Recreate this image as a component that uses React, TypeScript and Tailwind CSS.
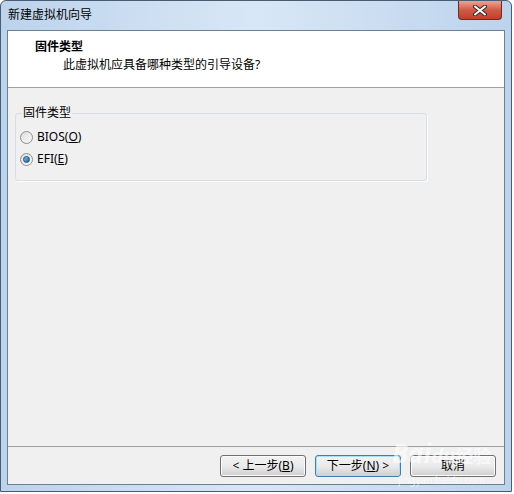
const font = { fontFamily: '"Noto Sans", "Noto Sans CJK SC", sans-serif' }

function Radio({ checked }: { checked?: boolean }) {
  return (
    <span className="w-[13px] h-[13px] rounded-full border border-[#8f8f8f] bg-gradient-to-br from-[#dcdcdc] to-[#fbfbfb] flex items-center justify-center">
      {checked && <span className="w-[7px] h-[7px] rounded-full bg-gradient-to-br from-[#7ec3f0] to-[#0d5fa8] border border-[#1e4f80]" />}
    </span>
  )
}

function Btn({ children, focus }: { children: React.ReactNode; focus?: boolean }) {
  return (
    <button
      className={
        'w-[86px] h-[22px] rounded-[3px] text-[12px] text-black flex items-center justify-center bg-gradient-to-b from-[#f2f2f2] via-[#ebebeb] to-[#cfcfcf] border ' +
        (focus ? 'border-[#3c7fb1] shadow-[inset_0_0_0_1px_#a6e1f9]' : 'border-[#707070] shadow-[inset_0_0_0_1px_#fcfcfc]')
      }
    >
      {children}
    </button>
  )
}

export default function App() {
  return (
    <div className="relative w-[514px] h-[494px] overflow-hidden bg-white" style={font}>
      <div className="w-[512px] h-[492px] rounded-t-[6px] border border-[#4a5c72] bg-gradient-to-r from-[#bcd3ec] via-[#d8e7f6] to-[#bcd3ec] flex flex-col">
        <div className="h-[29px] flex items-start justify-between">
          <span className="pl-[7px] pt-[7px] text-[12px] leading-[14px] text-black">新建虚拟机向导</span>
          <div className="mr-[9px] w-[44px] h-[19px] rounded-b-[4px] border border-t-0 border-[#6e2a22] bg-gradient-to-b from-[#e8a596] via-[#cf5a45] to-[#c43d28] flex items-center justify-center">
            <svg width="14" height="11" viewBox="0 0 14 11">
              <path d="M2 1.5 L12 9.5 M12 1.5 L2 9.5" stroke="#3b2a28" strokeWidth="4" strokeLinecap="round" />
              <path d="M2 1.5 L12 9.5 M12 1.5 L2 9.5" stroke="#ffffff" strokeWidth="2" strokeLinecap="round" />
            </svg>
          </div>
        </div>

        <div className="mx-[6px] h-[455px] border border-[#6d7f96] flex flex-col bg-[#f0f0f0]">
          <div className="h-[57px] bg-white border-b border-[#a0a0a0] pt-[8px] pl-[27px]">
            <div className="text-[12px] leading-[15px] font-bold text-black">固件类型</div>
            <div className="pl-[28px] pt-[3px] text-[12px] leading-[15px] text-black">此虚拟机应具备哪种类型的引导设备?</div>
          </div>

          <div className="flex-1 px-[7px] pt-[18px]">
            <fieldset className="w-[412px] h-[75px] border border-[#d5dfe5] rounded-[3px] px-[4px] shadow-[1px_1px_0_#ffffff]">
              <legend className="ml-[2px] px-[1px] text-[12px] leading-[14px] text-black">固件类型</legend>
              <div className="flex flex-col gap-[8px] pt-[10px]">
                <label className="flex items-center gap-[4px] text-[12px] leading-[14px] text-black">
                  <Radio />
                  <span>BIOS(<u>O</u>)</span>
                </label>
                <label className="flex items-center gap-[4px] text-[12px] leading-[14px] text-black">
                  <Radio checked />
                  <span>EFI(<u>E</u>)</span>
                </label>
              </div>
            </fieldset>
          </div>

          <div className="h-[38px] border-t border-[#a0a0a0] flex items-start justify-end gap-[9px] pt-[8px] pr-[8px]">
            <Btn>&lt; 上一步(<u>B</u>)</Btn>
            <Btn focus>下一步(<u>N</u>) &gt;</Btn>
            <Btn>取消</Btn>
          </div>
        </div>
      </div>

      <div className="absolute left-[392px] top-[440px] text-[26px] font-bold italic text-white/60 pointer-events-none leading-none">
        Bai<span className="text-[20px]">du</span>
        <span className="text-[18px] not-italic">经验</span>
      </div>
      <div className="absolute left-[398px] top-[473px] text-[10px] text-white/60 pointer-events-none">jingyan.baidu.com</div>
    </div>
  )
}
